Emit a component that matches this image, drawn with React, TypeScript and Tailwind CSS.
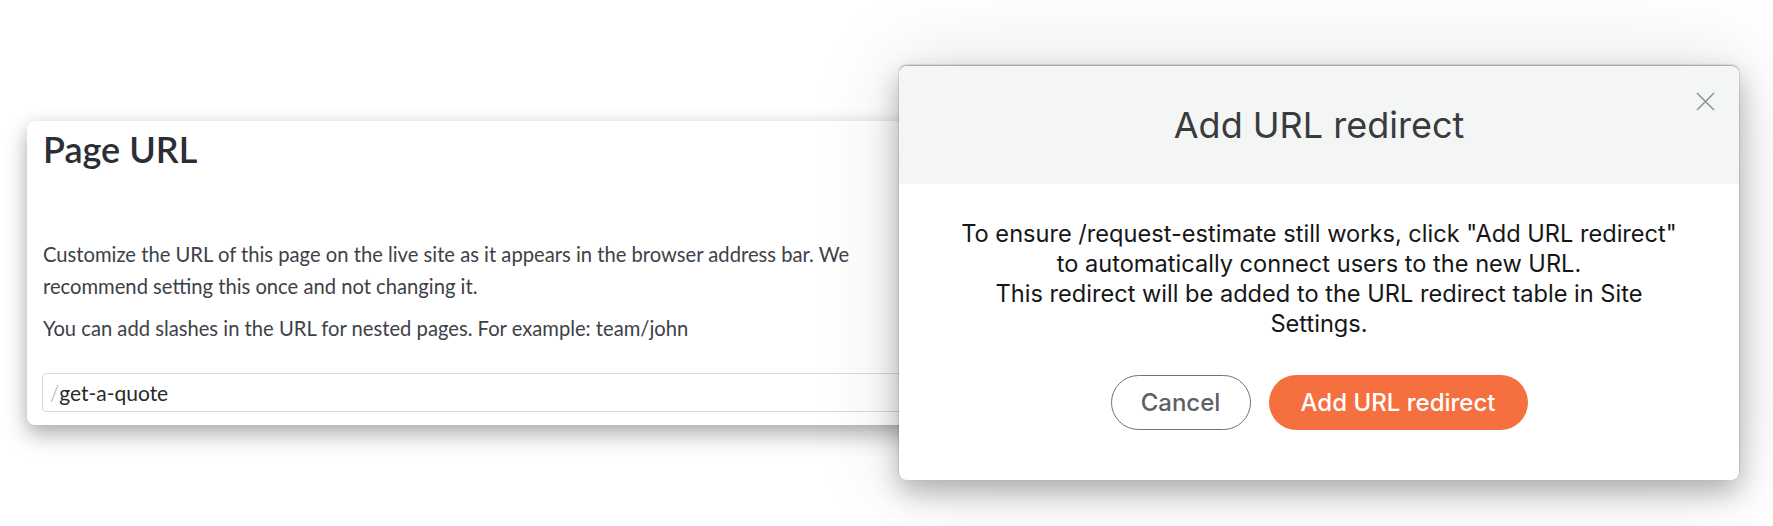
export default function App() {
  return (
    <div className="relative h-[526px] w-[1773px] overflow-hidden bg-white">
      {/* page url card */}
      <div className="pt-[121px] pl-[27px] font-[Lato,sans-serif]">
        <section className="h-[304px] w-[1000px] rounded-lg bg-white pl-4 pr-10 pt-[6px] shadow-[0_0_14px_rgba(0,0,0,0.06),0_10px_22px_rgba(0,0,0,0.3)]">
          <h1 className="text-[36px] font-semibold leading-[44px] text-[#2b2e36]">Page URL</h1>
          <div className="mt-[67px] whitespace-nowrap text-[20.2px] leading-[32px] text-[#3d4148]">
            <p>
              Customize the URL of this page on the live site as it appears in the browser address bar. We
              <br />
              recommend setting this once and not changing it.
            </p>
            <p className="mt-[10px]">You can add slashes in the URL for nested pages. For example: team/john</p>
          </div>
          <div className="-ml-px mt-[29px] flex h-[39px] items-center rounded border border-[#d4dadf] pl-[7px] text-[21px] text-[#2a2a2a]">
            <span className="font-light text-[#a0a4a8]">/</span>
            <span>get-a-quote</span>
          </div>
        </section>
      </div>

      {/* redirect dialog */}
      <div className="absolute left-[899px] top-[66px] h-[414px] w-[840px] overflow-hidden rounded-lg bg-white font-[Inter,sans-serif] shadow-[0_-1px_2px_rgba(0,0,0,0.35),0_12px_28px_rgba(0,0,0,0.28),0_0_90px_rgba(0,0,0,0.13)]">
        <div className="flex h-[118px] items-center justify-center bg-[#f4f6f5]">
          <h2 className="text-[36px] font-normal leading-[44px] text-[#3a3b3c]">Add URL redirect</h2>
        </div>
        <button className="absolute left-[797px] top-[26px] h-[19px] w-[19px]" aria-label="Close">
          <svg viewBox="0 0 19 19" className="h-[19px] w-[19px]" fill="none" stroke="#8a969a" strokeWidth="1.6">
            <path d="M1 1L18 18M18 1L1 18" />
          </svg>
        </button>
        <div className="pt-[35px] text-center text-[23.6px] leading-[30px] text-[#161617]">
          <p>
            To ensure /request-estimate still works, click "Add URL redirect"
            <br />
            to automatically connect users to the new URL.
            <br />
            This redirect will be added to the URL redirect table in Site
            <br />
            Settings.
          </p>
        </div>
        <div className="mt-[36px] flex justify-center gap-[18px]">
          <button className="h-[55px] w-[140px] rounded-full border-[1.5px] border-[#6e7378] text-[24px] font-medium text-[#5c6166]">
            Cancel
          </button>
          <button className="h-[55px] w-[259px] rounded-full bg-[#f6703f] text-[24px] font-medium text-white">
            Add URL redirect
          </button>
        </div>
      </div>
    </div>
  );
}
